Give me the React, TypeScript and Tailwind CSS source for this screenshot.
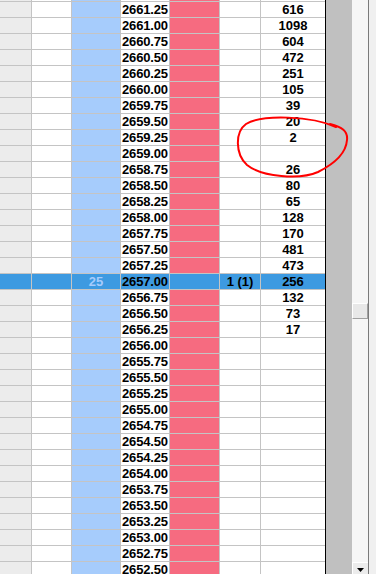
import React from 'react';

const volumes: Record<string, string> = {
    '2661.25': '616',
    '2661.00': '1098',
    '2660.75': '604',
    '2660.50': '472',
    '2660.25': '251',
    '2660.00': '105',
    '2659.75': '39',
    '2659.50': '20',
    '2659.25': '2',
    '2658.75': '26',
    '2658.50': '80',
    '2658.25': '65',
    '2658.00': '128',
    '2657.75': '170',
    '2657.50': '481',
    '2657.25': '473',
    '2657.00': '256',
    '2656.75': '132',
    '2656.50': '73',
    '2656.25': '17',
};

// one extra row on top, only its bottom line shows
const prices = Array.from({ length: 37 }, (_, i) => (2661.5 - i * 0.25).toFixed(2));

const LAST = '2657.00';

type LadderRowProps = {
    price: string;
    hidden?: boolean;
};

const LadderRow: React.FC<LadderRowProps> = ({ price, hidden }) => {
    const active = price === LAST;
    const cell = 'h-full border-r border-[#c4c4c4] flex items-center';

    return (
        <div className={`flex h-[16px] border-b border-[#c4c4c4] ${active ? 'bg-[#3d9ae1]' : ''}`}>
            <div className={`${cell} w-[32px] ${active ? '' : 'bg-[#ececec]'}`} />
            <div className={`${cell} w-[40px] ${active ? '' : 'bg-white'}`} />
            <div className={`${cell} w-[49px] justify-center ${active ? 'text-[#a6ccfc]' : 'bg-[#a6ccfc]'}`}>
                {active ? '25' : ''}
            </div>
            <div className={`${cell} w-[49px] pl-[1px] tracking-[-0.15px] ${active ? '' : 'bg-white'}`}>
                {hidden ? '' : price}
            </div>
            <div className={`${cell} w-[50px] ${active ? '' : 'bg-[#f66b80]'}`} />
            <div className={`${cell} w-[41px] justify-center ${active ? '' : 'bg-white'}`}>
                {active ? '1 (1)' : ''}
            </div>
            <div className={`h-full flex-1 flex items-center justify-center ${active ? '' : 'bg-white'}`}>
                {hidden ? '' : volumes[price] ?? ''}
            </div>
        </div>
    );
};

export default function App() {
    return (
        <div className="relative flex w-[376px] h-[574px] overflow-hidden bg-white font-['Liberation_Sans',Arial,sans-serif] font-bold text-[13px] leading-[15px] text-black">
            {/* price ladder */}
            <div className="w-[326px] h-full border-r border-black overflow-hidden">
                <div className="-mt-[14px]">
                    {prices.map((p, i) => (
                        <LadderRow key={p} price={p} hidden={i === 0} />
                    ))}
                </div>
            </div>

            {/* empty grey area */}
            <div className="w-[26px] h-full bg-[#c0c0c0]" />

            {/* scrollbar */}
            <div className="w-[16px] h-full flex flex-col bg-[#f6f6f6]">
                <div className="h-[303px]" />
                <div className="h-[16px] bg-[#e8e8e8] border-t border-l border-white border-r border-b border-r-[#a0a0a0] border-b-[#a0a0a0]" />
                <div className="flex-1" />
                <div className="h-[12px] bg-[#ececec] border-t border-l border-white flex justify-center pt-[5px]">
                    <svg width="7" height="4" viewBox="0 0 7 4">
                        <polygon points="0,0 7,0 3.5,4" fill="#000" />
                    </svg>
                </div>
            </div>
            <div className="w-[1px] h-full bg-[#7a7a7a]" />
            <div className="w-[7px] h-full bg-[#f0f0f0]" />

            {/* hand drawn annotation */}
            <svg className="absolute inset-0 pointer-events-none" width="376" height="574">
                <path
                    d="M 336 127 C 312 116, 262 114, 246 124 C 235 132, 235 154, 247 165 C 262 177, 300 180, 318 172 C 332 165, 346 154, 347 140 C 348 131, 342 127, 330 124"
                    fill="none"
                    stroke="#ff0000"
                    strokeWidth="2"
                    strokeLinecap="round"
                />
            </svg>
        </div>
    );
}
